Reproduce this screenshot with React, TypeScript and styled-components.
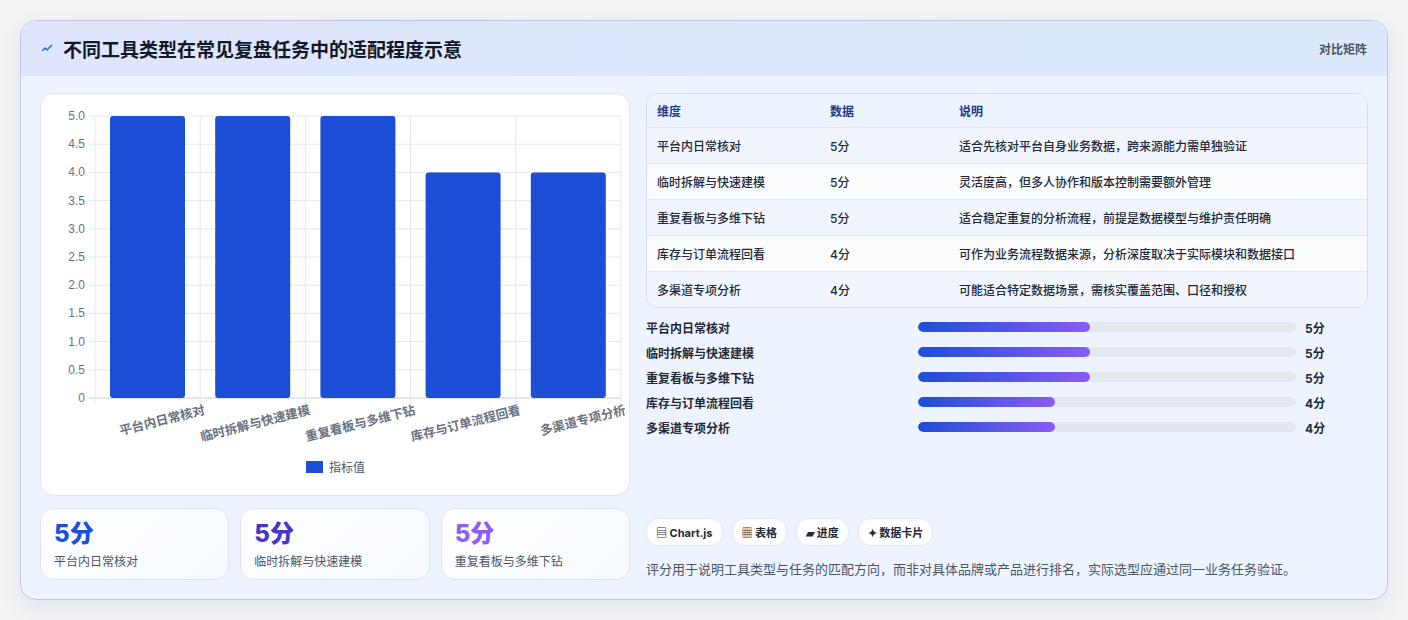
import React from "react";
import styled, { createGlobalStyle } from "styled-components";

const G = createGlobalStyle`
  body { margin:0; background:#f3f4f6; font-family: Inter, "Noto Sans CJK SC", sans-serif; }
`;
const Page = styled.div`padding:20px 20px;`;
const Card = styled.div`
  border:1px solid #b9c7ee; border-radius:16px; overflow:hidden; background:#eef4ff;
  box-shadow:0 8px 24px rgba(30,50,120,.08); height:578px; display:flex; flex-direction:column;
`;
const Header = styled.div`
  height:55px; flex:none; display:flex; align-items:center; justify-content:space-between;
  padding:0 20px 0 20px; background:linear-gradient(90deg,#dfe5fd,#dce9fc);
`;
const Title = styled.h1`margin:0; font-size:19px; font-weight:700; color:#111827; display:flex; align-items:center; gap:10px;`;
const Tag = styled.span`font-size:12px; color:#4b5563; font-weight:600;`;
const Body = styled.div`display:grid; grid-template-columns:590px 1fr; gap:16px; padding:17px 19px 0 19px; flex:1;`;
const Col = styled.div`display:flex; flex-direction:column;`;
const ChartBox = styled.div`height:403px; background:#fff; border:1px solid #dde5f3; border-radius:14px; box-sizing:border-box;`;
const Kpis = styled.div`display:grid; grid-template-columns:repeat(3,1fr); gap:11px; margin-top:12px;`;
const Kpi = styled.div`height:72px; box-sizing:border-box; background:linear-gradient(135deg,#fff,#f6faff); border:1px solid #dbe6f5; border-radius:14px; padding:10px 13px;`;
const KV = styled.div<{c:string}>`font-size:24px; font-weight:800; color:${p=>p.c}; line-height:30px;`;
const KL = styled.div`font-size:12px; color:#4b5563; margin-top:3px;`;
const Table = styled.div`border:1px solid #d3dcea; border-radius:12px; overflow:hidden; background:#f7f9fd;`;
const Row = styled.div<{h?:boolean; alt?:boolean}>`
  display:grid; grid-template-columns:173px 129px 1fr; align-items:center; padding-left:10px;
  height:${p=>p.h?33:35}px; font-size:12px; border-top:${p=>p.h?"none":"1px solid #e1e6ef"};
  background:${p=>p.h?"#eef4ff":p.alt?"#f9fbfd":"#f1f5fd"};
  color:${p=>p.h?"#1e3a8a":"#1f2937"}; font-weight:${p=>p.h?700:500};
`;
const Bars = styled.div`display:flex; flex-direction:column; gap:7px; margin-top:10px;`;
const BarRow = styled.div`display:grid; grid-template-columns:272px 378px 1fr; align-items:center; height:18px; font-size:12px; font-weight:600; color:#1f2937; gap:0;`;
const Track = styled.div`height:10px; border-radius:5px; background:#e3e7f0; overflow:hidden;`;
const Fill = styled.div`height:100%; border-radius:5px; background:linear-gradient(90deg,#1d4ed8,#8b5cf6);`;
const BV = styled.span`padding-left:9px; font-weight:700; color:#1f2937;`;
const Chips = styled.div`display:flex; gap:9px; margin-top:auto;`;
const Chip = styled.span`height:26px; padding:0 9px; display:inline-flex; align-items:center; gap:4px; background:#fff; border:1px solid #e3e9f4; border-radius:13px; font-size:11px; font-weight:700; color:#1f2937;`;
const Note = styled.p`margin:13px 0 21px; font-size:13px; color:#4b5563;`;

const cats = ["平台内日常核对","临时拆解与快速建模","重复看板与多维下钻","库存与订单流程回看","多渠道专项分析"];
const vals = [5,5,5,4,4];
const desc = ["适合先核对平台自身业务数据，跨来源能力需单独验证","灵活度高，但多人协作和版本控制需要额外管理","适合稳定重复的分析流程，前提是数据模型与维护责任明确","可作为业务流程数据来源，分析深度取决于实际模块和数据接口","可能适合特定数据场景，需核实覆盖范围、口径和授权"];

function Chart(){
  const L=54,R=580,T=22,B=304,w=(R-L)/5;
  const y=(v:number)=>B-(B-T)*v/5;
  return <svg width="590" height="403" style={{display:"block"}}>
    {Array.from({length:11},(_,i)=>i*0.5).map(v=><g key={v}>
      <line x1={L-6} x2={R} y1={y(v)} y2={y(v)} stroke={v===0?"#c8ccd4":"#e5e7eb"}/>
      <text x={L-10} y={y(v)+4} fontSize="12" fill="#6b7280" textAnchor="end" fontFamily="Liberation Sans">{v===0?"0":v.toFixed(1)}</text>
    </g>)}
    {Array.from({length:6},(_,i)=><line key={i} x1={L+i*w} x2={L+i*w} y1={T} y2={B+6} stroke="#e5e7eb"/>)}
    {vals.map((v,i)=><rect key={i} x={L+i*w+15} y={y(v)} width={75} height={B-y(v)} rx="3" fill="#1d4ed8"/>)}
    {cats.map((c,i)=><text key={c} fontSize="12.5" fontWeight="700" fill="#6b7280" textAnchor="end" transform={`translate(${L+i*w+w/2+58},${B+16}) rotate(-14)`}>{c}</text>)}
    <rect x="265" y="367" width="17" height="12" fill="#1d4ed8"/>
    <text x="288" y="378" fontSize="12" fill="#4b5563">指标值</text>
  </svg>;
}

export default function App(){
  return <Page><G/><Card>
    <Header><Title><svg width="12" height="12" viewBox="0 0 12 12"><path d="M1 8l3-3 2 2 5-5" stroke="#2563eb" strokeWidth="1.5" fill="none"/></svg>不同工具类型在常见复盘任务中的适配程度示意</Title><Tag>对比矩阵</Tag></Header>
    <Body>
      <Col>
        <ChartBox><Chart/></ChartBox>
        <Kpis>
          <Kpi><KV c="#1d4ed8">5分</KV><KL>平台内日常核对</KL></Kpi>
          <Kpi><KV c="#4338ca">5分</KV><KL>临时拆解与快速建模</KL></Kpi>
          <Kpi><KV c="#8b5cf6">5分</KV><KL>重复看板与多维下钻</KL></Kpi>
        </Kpis>
      </Col>
      <Col>
        <Table>
          <Row h><span>维度</span><span>数据</span><span>说明</span></Row>
          {cats.map((c,i)=><Row key={c} alt={i%2===1}><span>{c}</span><span>{vals[i]}分</span><span>{desc[i]}</span></Row>)}
        </Table>
        <Bars>
          {cats.map((c,i)=><BarRow key={c}><span>{c}</span><Track><Fill style={{width:`${vals[i]===5?45.5:36.3}%`}}/></Track><BV>{vals[i]}分</BV></BarRow>)}
        </Bars>
        <Chips><Chip>▤ Chart.js</Chip><Chip>▦ 表格</Chip><Chip>▰ 进度</Chip><Chip>✦ 数据卡片</Chip></Chips>
        <Note>评分用于说明工具类型与任务的匹配方向，而非对具体品牌或产品进行排名，实际选型应通过同一业务任务验证。</Note>
      </Col>
    </Body>
  </Card></Page>;
}
